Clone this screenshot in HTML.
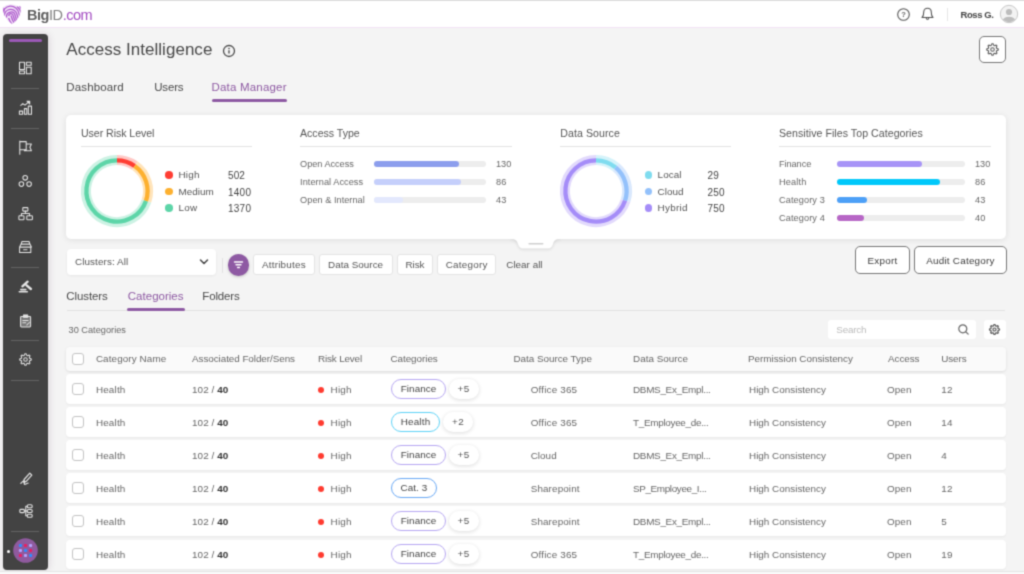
<!DOCTYPE html>
<html lang="en"><head><meta charset="utf-8"><title>BigID - Access Intelligence</title>
<style>
*{box-sizing:border-box;margin:0;padding:0}
html,body{width:1024px;height:574px;overflow:hidden;background:#f4f4f4;font-family:"Liberation Sans",sans-serif;color:#444}
#app{will-change:transform;filter:url(#soft);position:relative;width:1024px;height:574px;overflow:hidden;background:#f4f4f4}
.a{position:absolute}
.t{position:absolute;white-space:nowrap;line-height:1;transform-origin:0 50%}
#topbar{left:0;top:0;width:1024px;height:28px;background:#fff;border-top:1px solid #dcdcdc;border-bottom:1px solid #f2e3f5}
#side{left:3px;top:34px;width:45px;height:536px;background:#434343;border-radius:4px;box-shadow:1px 0 7px rgba(90,50,90,.16)}
.sdiv{position:absolute;left:8px;width:28px;height:1px;background:#626262}
.card{background:#fff;border-radius:5px;box-shadow:0 1px 6px rgba(0,0,0,.09)}
.hr{position:absolute;height:1px;background:#e3e3e3}
.bar{position:absolute;height:6px;border-radius:3px;background:#ededed}
.bar i{position:absolute;left:0;top:0;height:6px;border-radius:3px}
.dot{position:absolute;width:7.500px;height:7.500px;border-radius:50%}
.chip{position:absolute;height:21px;top:254px;background:#fff;border:1px solid #e4e4e4;border-radius:3px}
.btn{position:absolute;top:246px;height:28px;background:#fff;border:1px solid #777;border-radius:5px}
.row{position:absolute;left:66px;width:940px;height:29px;background:#fff;border-radius:4px;box-shadow:0 1px 2px rgba(0,0,0,.05)}
.cb{position:absolute;left:6px;width:12px;height:12px;border:1px solid #c4c4c4;border-radius:3px;background:#fff}
.pill{position:absolute;height:20px;border-radius:10px;background:#fff;border:1px solid #b7a8f2}
.plus{position:absolute;height:20px;border-radius:10px;background:#fff;box-shadow:0 1px 4px rgba(0,0,0,.14)}
.rd{position:absolute;width:6px;height:6px;border-radius:3px;background:#ff3b30}
</style></head>
<body><svg width="0" height="0" style="position:absolute"><defs><filter id="soft" x="0" y="0" width="100%" height="100%" color-interpolation-filters="sRGB"><feConvolveMatrix order="3" kernelMatrix="0.03 0.12 0.03 0.12 0.4 0.12 0.03 0.12 0.03" divisor="1" edgeMode="duplicate" preserveAlpha="true"/></filter></defs></svg><div id="app">
<div id="topbar" class="a"></div>
<svg class="a" style="left:1px;top:3px" width="22" height="23" viewBox="0 0 22 23" fill="none"><defs><clipPath id="sh"><path d="M1.600 4.200c1.200-.3 2.200-.9 3-1.800 1.700-.500 3.500-.800 5.500-.800 2 0 3.700 .3 5.300 .9 .9 1.100 2.300 1.500 3.400 .4l.8 .8c.5 4.500-.5 8.500-2.800 11.800-1.600 2.300-3.400 4-5.600 5.400-2.500-1.500-4.700-3.600-6.300-6.200-1.900-3.100-2.900-6.700-3.300-10.500z"/></clipPath></defs>
<path d="M1.600 4.200c1.200-.3 2.200-.9 3-1.800 1.700-.500 3.500-.800 5.500-.800 2 0 3.700 .3 5.300 .9 .9 1.100 2.300 1.500 3.400 .4l.8 .8c.5 4.500-.5 8.500-2.800 11.800-1.600 2.300-3.400 4-5.600 5.400-2.500-1.500-4.700-3.600-6.300-6.200-1.900-3.100-2.900-6.700-3.300-10.500z" fill="#b566d3" fill-opacity=".18"/><g clip-path="url(#sh)" stroke="#ae5ccd" stroke-width="1.300">
<path d="M10 12.500c.6 3 2 6 4 8.500"/>
<path d="M7.800 13c0-3 4-3.300 4.400-.3 .5 3 1.800 5.500 3.600 7.500"/>
<path d="M5.600 14.500c-.8-6.500 7.600-7.500 8.600-1.800 .5 2.700 1.500 4.800 3 6.500"/>
<path d="M3.500 15c-1.500-10.500 11.400-11.500 12.700-2.800 .4 2.300 1.200 4 2.400 5.300"/>
<path d="M1.600 13c-1-12.500 15.200-13.500 16.600-1.500 .2 1.700 .8 3 1.700 4"/>
<path d="M16 3.500c2.300 1.800 3.800 4.300 4.200 7.300M18.500 3c1.200 1.300 2.200 3 2.700 5"/>
<path d="M3.300 5c-.6 2.500-.6 5.500 .4 8.500M1.200 6c-.3 2-.2 4.500 .5 7"/>
<path d="M7.600 15c.8 2.800 2.300 5.300 4.600 7.500M5.700 17c.9 2.200 2.400 4.200 4.500 6M10.200 22l3 0"/>
</g></svg>
<span class="t" style="left:27px;top:7.500px;font-size:14.500px;letter-spacing:-0.45px;color:#555"><b style="color:#606060">Big</b><span style="color:#808080">ID</span><span style="color:#a34cc2">.com</span></span>
<svg class="a" style="left:896px;top:7px" width="15" height="15" viewBox="0 0 15 15"><circle cx="7.500" cy="7.500" r="5.800" fill="none" stroke="#555" stroke-width="1.100"/><text x="7.500" y="10.300" font-size="7.500" font-weight="700" text-anchor="middle" fill="#666" font-family="Liberation Sans, sans-serif">?</text></svg>
<svg class="a" style="left:920px;top:6px" width="15" height="16" viewBox="0 0 15 16" fill="none" stroke="#555" stroke-width="1.100" stroke-linejoin="round" stroke-linecap="round"><path d="M2 11.500c1.600-1.200 1.700-2.600 1.700-5.200 0-2.300 1.500-4 3.800-4s3.800 1.700 3.800 4c0 2.600 .1 4 1.700 5.200z"/><path d="M6.300 12.200c.2 .9 .6 1.300 1.200 1.300s1-.4 1.200-1.300"/></svg>
<div class="a" style="left:947px;top:8px;width:1px;height:13px;background:#e6e6e6"></div>
<span class="t" style="left:960.5px;top:10px;font-size:9.5px;color:#444;font-weight:700;letter-spacing:-0.41px;">Ross G.</span>
<svg class="a" style="left:999px;top:4px" width="20" height="20" viewBox="0 0 20 20"><defs><clipPath id="av"><circle cx="10" cy="10" r="8.200"/></clipPath></defs><circle cx="10" cy="10" r="8.700" fill="#f3f3f3" stroke="#c8c8c8" stroke-width="1"/><g clip-path="url(#av)" fill="#bdbdbd"><circle cx="10" cy="8" r="3.100"/><ellipse cx="10" cy="17.500" rx="6.500" ry="4.800"/></g></svg>
<div id="side" class="a">
<div class="a" style="left:6px;top:5px;width:33px;height:3px;border-radius:2px;background:#9b59b6"></div>
<div class="sdiv" style="top:54.0px"></div>
<div class="sdiv" style="top:93.5px"></div>
<div class="sdiv" style="top:232.5px"></div>
<div class="sdiv" style="top:306.0px"></div>
<div class="sdiv" style="top:346.0px"></div>
<div class="sdiv" style="top:497.0px"></div>
</div>
<svg class="a" style="left:0;top:0" width="50" height="400" viewBox="0 0 50 400" fill="none" stroke="#e4e4e4" stroke-width="1.050" stroke-linejoin="round" stroke-linecap="round"><rect x="19.500" y="62.200" width="5" height="7.300"/><rect x="26.400" y="62.200" width="4.800" height="3"/><rect x="19.500" y="71" width="5" height="2.800"/><rect x="26.400" y="67.200" width="4.800" height="6.600"/><rect x="19.400" y="111.100" width="3.200" height="3.200"/><rect x="24.400" y="108.600" width="2.400" height="5.700"/><rect x="28.300" y="106.100" width="3.200" height="8.200"/><path d="M20.800 105.400l2-1.800 2.200 1.600 3.800-3.300"/><path d="M27 101.200h2.700v2.700z" fill="#e4e4e4"/><path d="M19.800 141v13.300M19.800 141.600h6.400v8.200h-6.400M26.200 144h5.200l-1.500 3.300 1.500 3.400h-7v-.9"/><circle cx="25.200" cy="177.800" r="2.300"/><circle cx="21.400" cy="184.100" r="2.300"/><circle cx="29.100" cy="184.100" r="2.300"/><rect x="22.800" y="207.600" width="5.100" height="3.500" rx=".6"/><rect x="18.900" y="215.800" width="5.100" height="4" rx=".8"/><rect x="26.800" y="215.800" width="5.600" height="4" rx=".8"/><path d="M25.400 211.100v2.400M21.400 215.800v-2.300h8.200v2.300"/><path d="M22 241.500h7l.9 2.600h-8.800zM21.100 244.100l-1.500 3h11.800l-1.500-3M19.600 247.100h11.200v5.300h-11.200zM23.600 249.800h3.400"/><path d="M22.400 286.300l5.200-4.600M26.600 285.300l4.300 3.700" stroke-width="2.400"/><path d="M19.300 291.700h8M20.800 289.600h5" stroke-width="1.600"/><rect x="20.600" y="316.400" width="10" height="10.500" rx=".8" fill="#fff" fill-opacity=".28"/><rect x="23.500" y="314.900" width="4.200" height="2.400" fill="#e4e4e4"/><path d="M22.800 320.500h5.400M22.800 322.800h3M26.800 325l2.500-2.500"/></svg>
<svg class="a" style="left:17.9px;top:352.1px" width="15" height="15" viewBox="0 0 16 16" fill="none" stroke="#e4e4e4" stroke-width="1.1" stroke-linejoin="round" stroke-linecap="round"><path d="M14.17 7.39L14.17 8.61L12.40 9.34L12.06 10.17L12.79 11.93L11.93 12.79L10.17 12.06L9.34 12.40L8.61 14.17L7.39 14.17L6.66 12.40L5.83 12.06L4.07 12.79L3.21 11.93L3.94 10.17L3.60 9.34L1.83 8.61L1.83 7.39L3.60 6.66L3.94 5.83L3.21 4.07L4.07 3.21L5.83 3.94L6.66 3.60L7.39 1.83L8.61 1.83L9.34 3.60L10.17 3.94L11.93 3.21L12.79 4.07L12.06 5.83L12.40 6.66Z"/><circle cx="8" cy="8" r="1.900"/></svg>
<svg class="a" style="left:17.5px;top:470.5px" width="16" height="16" viewBox="0 0 16 16" fill="none" stroke="#e4e4e4" stroke-width="1.2" stroke-linejoin="round" stroke-linecap="round"><path d="M11.800 2.200l2 2-5.600 6.200-2.600 .8 .5-2.700z" stroke-width="1.200"/><path d="M2.800 12.300c1.500-1.800 3-2.800 3.800-2.300 .9 .6-1.200 2.800-.2 3.300 .9 .4 2.300-1 3.800-1.300"/></svg>
<svg class="a" style="left:17.5px;top:503.2px" width="16" height="16" viewBox="0 0 16 16" fill="none" stroke="#e4e4e4" stroke-width="1.1" stroke-linejoin="round" stroke-linecap="round"><rect x="1.800" y="6.400" width="4.600" height="3.200" rx="1"/><rect x="9.200" y="1.800" width="5" height="3" rx="1.300"/><rect x="9.200" y="6.500" width="5" height="3" rx="1.300"/><rect x="9.200" y="11.200" width="5" height="3" rx="1.300"/><path d="M6.400 8h2.800M7.800 3.300v9.400M7.800 3.300h1.400M7.800 12.700h1.400"/></svg>
<svg class="a" style="left:12.900px;top:538.400px" width="25" height="25" viewBox="0 0 25 25"><circle cx="12.500" cy="12.500" r="12.300" fill="#8f5a9e"/><rect x="5.80" y="5.90" width="3.200" height="3.200" rx="1.100" fill="#2f8cff"/><rect x="10.90" y="5.90" width="3.200" height="3.200" rx="1.100" fill="#ea1d63"/><rect x="16.00" y="5.90" width="3.200" height="3.200" rx="1.100" fill="#b6a0fb"/><rect x="5.80" y="10.90" width="3.200" height="3.200" rx="1.100" fill="#b6a0fb"/><rect x="10.90" y="10.90" width="3.200" height="3.200" rx="1.100" fill="#2f8cff"/><rect x="16.00" y="10.90" width="3.200" height="3.200" rx="1.100" fill="#ea1d63"/><rect x="5.80" y="15.90" width="3.200" height="3.200" rx="1.100" fill="#ea1d63"/><rect x="10.90" y="15.90" width="3.200" height="3.200" rx="1.100" fill="#b6a0fb"/><rect x="16.00" y="15.90" width="3.200" height="3.200" rx="1.100" fill="#2f8cff"/></svg>
<div class="a" style="left:6.500px;top:549.800px;width:3px;height:3px;border-radius:50%;background:#fff"></div>
<span class="t" style="left:66.3px;top:41px;font-size:17px;color:#484848;letter-spacing:0.03px;">Access Intelligence</span>
<svg class="a" style="left:222.200px;top:43.500px" width="14" height="14" viewBox="0 0 14 14"><circle cx="7" cy="7" r="5.500" fill="none" stroke="#4c4c4c" stroke-width="1.300"/><path d="M7 6.300v3.200" stroke="#444" stroke-width="1.300"/><circle cx="7" cy="4.500" r=".8" fill="#444"/></svg>
<span class="t" style="left:66.3px;top:82px;font-size:11.5px;color:#4a4a4a;letter-spacing:0.13px;">Dashboard</span>
<span class="t" style="left:154.2px;top:82px;font-size:11.5px;color:#4a4a4a;letter-spacing:-0.17px;">Users</span>
<span class="t" style="left:211.5px;top:82px;font-size:11.5px;color:#8e5aa3;letter-spacing:0.19px;">Data Manager</span>
<div class="a" style="left:211.500px;top:99.300px;width:75.500px;height:3.200px;border-radius:2px;background:#8e5aa3"></div>
<div class="a" style="left:979px;top:36px;width:27px;height:27px;background:#fff;border:1px solid #777;border-radius:5px"></div>
<svg class="a" style="left:985px;top:42px" width="15" height="15" viewBox="0 0 16 16" fill="none" stroke="#555" stroke-width="1.100" stroke-linejoin="round"><path d="M14.17 7.39L14.17 8.61L12.40 9.34L12.06 10.17L12.79 11.93L11.93 12.79L10.17 12.06L9.34 12.40L8.61 14.17L7.39 14.17L6.66 12.40L5.83 12.06L4.07 12.79L3.21 11.93L3.94 10.17L3.60 9.34L1.83 8.61L1.83 7.39L3.60 6.66L3.94 5.83L3.21 4.07L4.07 3.21L5.83 3.94L6.66 3.60L7.39 1.83L8.61 1.83L9.34 3.60L10.17 3.94L11.93 3.21L12.79 4.07L12.06 5.83L12.40 6.66Z"/><circle cx="8" cy="8" r="1.900"/></svg>
<div class="a card" style="left:66px;top:115px;width:940px;height:124px"></div>
<svg class="a" style="left:513px;top:239px;overflow:visible" width="45" height="16" viewBox="0 0 45 16"><defs><filter id="nb" x="-20%" y="-50%" width="140%" height="250%"><feGaussianBlur stdDeviation="1.500"/></filter><clipPath id="nc"><rect x="-6" y="0" width="57" height="18"/></clipPath></defs><g clip-path="url(#nc)"><path d="M-2 -1H47V0C42 0 41 2 40 5S38 9.400 35 9.400H10C7 9.400 6 8 5 5S3 0 -2 0Z" fill="#000" fill-opacity=".13" filter="url(#nb)" transform="translate(0 1)"/></g><path d="M-2 -1H47V0C42 0 41 2 40 5S38 9.400 35 9.400H10C7 9.400 6 8 5 5S3 0 -2 0Z" fill="#fff"/><path d="M16.200 4.800h13.500" stroke="#cfcfcf" stroke-width="1.600" stroke-linecap="round"/></svg>
<span class="t" style="left:81.0px;top:128px;font-size:10.6px;color:#555;letter-spacing:-0.05px;">User Risk Level</span>
<span class="t" style="left:300.0px;top:128px;font-size:10.6px;color:#555;letter-spacing:-0.01px;">Access Type</span>
<span class="t" style="left:560.2px;top:128px;font-size:10.6px;color:#555;letter-spacing:0.08px;">Data Source</span>
<span class="t" style="left:779.0px;top:128px;font-size:10.6px;color:#555;letter-spacing:0.05px;">Sensitive Files Top Categories</span>
<div class="hr" style="left:81px;top:146px;width:171px"></div>
<div class="hr" style="left:300px;top:146px;width:212px"></div>
<div class="hr" style="left:560px;top:146px;width:171px"></div>
<div class="hr" style="left:779px;top:146px;width:212px"></div>
<svg class="a" style="left:77.2px;top:150.9px" width="80" height="80" viewBox="-40 -40 80 80" fill="none"><path d="M0.00 -31.10A31.1 31.1 0 0 1 17.93 -25.41" stroke="#ffc9c6" stroke-width="10"/><path d="M17.93 -25.41A31.1 31.1 0 0 1 29.41 10.13" stroke="#ffe4bb" stroke-width="10"/><path d="M29.41 10.13A31.1 31.1 0 1 1 -0.00 -31.10" stroke="#cdf2e4" stroke-width="10"/><path d="M0.00 -30.60A30.6 30.6 0 0 1 17.64 -25.00" stroke="#ff3d33" stroke-width="4.300"/><path d="M17.64 -25.00A30.6 30.6 0 0 1 28.93 9.96" stroke="#fdb02f" stroke-width="4.300"/><path d="M28.93 9.96A30.6 30.6 0 1 1 -0.00 -30.60" stroke="#5dd5a8" stroke-width="4.300"/></svg>
<svg class="a" style="left:556.3px;top:150.9px" width="80" height="80" viewBox="-40 -40 80 80" fill="none"><path d="M0.00 -31.10A31.1 31.1 0 0 1 19.87 -23.93" stroke="#d5f3fa" stroke-width="10"/><path d="M19.87 -23.93A31.1 31.1 0 0 1 29.53 9.77" stroke="#d9e8fd" stroke-width="10"/><path d="M29.53 9.77A31.1 31.1 0 1 1 -0.00 -31.10" stroke="#e2dafc" stroke-width="10"/><path d="M0.00 -30.60A30.6 30.6 0 0 1 19.55 -23.54" stroke="#7fdcef" stroke-width="4.300"/><path d="M19.55 -23.54A30.6 30.6 0 0 1 29.05 9.61" stroke="#93c1fb" stroke-width="4.300"/><path d="M29.05 9.61A30.6 30.6 0 1 1 -0.00 -30.60" stroke="#a58df8" stroke-width="4.300"/></svg>
<div class="dot" style="left:165px;top:171.25px;background:#ff3d33"></div>
<span class="t" style="left:178.5px;top:170px;font-size:9.9px;color:#555;letter-spacing:0.20px;">High</span>
<span class="t" style="left:228.0px;top:171px;font-size:10px;color:#444;letter-spacing:0.10px;">502</span>
<div class="dot" style="left:165px;top:187.85px;background:#fdb02f"></div>
<span class="t" style="left:178.5px;top:187px;font-size:9.9px;color:#555;letter-spacing:0.01px;">Medium</span>
<span class="t" style="left:228.0px;top:188px;font-size:10px;color:#444;letter-spacing:0.24px;">1400</span>
<div class="dot" style="left:165px;top:204.25px;background:#5dd5a8"></div>
<span class="t" style="left:178.5px;top:203px;font-size:9.9px;color:#555;letter-spacing:0.23px;">Low</span>
<span class="t" style="left:228.0px;top:204px;font-size:10px;color:#444;letter-spacing:0.24px;">1370</span>
<div class="dot" style="left:644.500px;top:171.25px;background:#7fdcef"></div>
<span class="t" style="left:657.6px;top:170px;font-size:9.9px;color:#555;letter-spacing:0.06px;">Local</span>
<span class="t" style="left:707.6px;top:171px;font-size:10px;color:#444;letter-spacing:0.09px;">29</span>
<div class="dot" style="left:644.500px;top:187.85px;background:#93c1fb"></div>
<span class="t" style="left:657.6px;top:187px;font-size:9.9px;color:#555;letter-spacing:0.04px;">Cloud</span>
<span class="t" style="left:707.6px;top:188px;font-size:10px;color:#444;letter-spacing:0.20px;">250</span>
<div class="dot" style="left:644.500px;top:204.25px;background:#a58df8"></div>
<span class="t" style="left:657.6px;top:203px;font-size:9.9px;color:#555;letter-spacing:0.28px;">Hybrid</span>
<span class="t" style="left:707.6px;top:204px;font-size:10px;color:#444;letter-spacing:0.20px;">750</span>
<span class="t" style="left:300.1px;top:160px;font-size:9.2px;color:#666;letter-spacing:-0.04px;">Open Access</span>
<div class="bar" style="left:374.100px;top:161.2px;width:112.200px"><i style="width:84.6px;background:#8c9eed"></i></div>
<span class="t" style="left:495.9px;top:160px;font-size:9.2px;color:#666;letter-spacing:0.05px;">130</span>
<span class="t" style="left:300.1px;top:178px;font-size:9.2px;color:#666;letter-spacing:0.05px;">Internal Access</span>
<div class="bar" style="left:374.100px;top:179.2px;width:112.200px"><i style="width:86.6px;background:#c5cffb"></i></div>
<span class="t" style="left:495.9px;top:178px;font-size:9.2px;color:#666;letter-spacing:0.13px;">86</span>
<span class="t" style="left:300.1px;top:196px;font-size:9.2px;color:#666;letter-spacing:0.02px;">Open &amp; Internal</span>
<div class="bar" style="left:374.100px;top:197.3px;width:112.200px"><i style="width:29.4px;background:#e3e8fd"></i></div>
<span class="t" style="left:495.9px;top:196px;font-size:9.2px;color:#666;letter-spacing:0.13px;">43</span>
<span class="t" style="left:779.0px;top:160px;font-size:9.2px;color:#666;letter-spacing:-0.07px;">Finance</span>
<div class="bar" style="left:837.400px;top:161.2px;width:128px"><i style="width:84.3px;background:#a794f7"></i></div>
<span class="t" style="left:974.9px;top:160px;font-size:9.2px;color:#666;letter-spacing:0.05px;">130</span>
<span class="t" style="left:779.0px;top:178px;font-size:9.2px;color:#666;letter-spacing:0.14px;">Health</span>
<div class="bar" style="left:837.400px;top:179.2px;width:128px"><i style="width:102.4px;background:#00c8fa"></i></div>
<span class="t" style="left:974.9px;top:178px;font-size:9.2px;color:#666;letter-spacing:0.13px;">86</span>
<span class="t" style="left:779.0px;top:196px;font-size:9.2px;color:#666;letter-spacing:0.09px;">Category 3</span>
<div class="bar" style="left:837.400px;top:197.3px;width:128px"><i style="width:29.6px;background:#4da0f7"></i></div>
<span class="t" style="left:974.9px;top:196px;font-size:9.2px;color:#666;letter-spacing:0.13px;">43</span>
<span class="t" style="left:779.0px;top:214px;font-size:9.2px;color:#666;letter-spacing:0.09px;">Category 4</span>
<div class="bar" style="left:837.400px;top:215.3px;width:128px"><i style="width:26.6px;background:#b766c6"></i></div>
<span class="t" style="left:974.9px;top:214px;font-size:9.2px;color:#666;letter-spacing:0.13px;">40</span>
<div class="a" style="left:67px;top:249px;width:148.500px;height:25.500px;background:#fff;border-radius:4px;box-shadow:0 1px 3px rgba(0,0,0,.06)"></div>
<span class="t" style="left:75.0px;top:257px;font-size:9.9px;color:#555;letter-spacing:0.09px;">Clusters: All</span>
<svg class="a" style="left:199.300px;top:257.700px" width="10" height="8" viewBox="0 0 10 8" fill="none" stroke="#444" stroke-width="1.500" stroke-linecap="round" stroke-linejoin="round"><path d="M1.500 2l3.500 3.500 3.500-3.500"/></svg>
<div class="a" style="left:222px;top:258px;width:1px;height:15px;background:#e2e2e2"></div>
<div class="a" style="left:228.200px;top:254.300px;width:21.300px;height:21.300px;border-radius:50%;background:#8e5aa3;box-shadow:0 1px 3px rgba(0,0,0,.2)"></div>
<svg class="a" style="left:228.300px;top:254.400px" width="21" height="21" viewBox="0 0 21 21" stroke="#fff" stroke-width="1.400" stroke-linecap="round"><path d="M6.500 8h8M8 10.800h5M9.600 13.500h1.800"/></svg>
<div class="chip" style="left:252.8px;width:62.2px"></div>
<span class="t" style="left:261.9px;top:260px;font-size:9.9px;color:#555;letter-spacing:0.23px;">Attributes</span>
<div class="chip" style="left:319px;width:73.9px"></div>
<span class="t" style="left:328.1px;top:260px;font-size:9.9px;color:#555;letter-spacing:0.01px;">Data Source</span>
<div class="chip" style="left:396.6px;width:36.7px"></div>
<span class="t" style="left:405.4px;top:260px;font-size:9.9px;color:#555;letter-spacing:-0.03px;">Risk</span>
<div class="chip" style="left:436.8px;width:59.7px"></div>
<span class="t" style="left:445.7px;top:260px;font-size:9.9px;color:#555;letter-spacing:0.23px;">Category</span>
<span class="t" style="left:506.3px;top:260px;font-size:9.9px;color:#555;letter-spacing:-0.00px;">Clear all</span>
<div class="btn" style="left:855px;width:55px"></div>
<span class="t" style="left:867.5px;top:256px;font-size:9.9px;color:#3a3a3a;letter-spacing:0.23px;">Export</span>
<div class="btn" style="left:914px;width:93px"></div>
<span class="t" style="left:926.2px;top:256px;font-size:9.9px;color:#3a3a3a;letter-spacing:0.23px;">Audit Category</span>
<span class="t" style="left:66.3px;top:291px;font-size:11.5px;color:#4a4a4a;letter-spacing:-0.10px;">Clusters</span>
<span class="t" style="left:127.8px;top:291px;font-size:11.5px;color:#8e5aa3;letter-spacing:0.01px;">Categories</span>
<span class="t" style="left:202.3px;top:291px;font-size:11.5px;color:#4a4a4a;letter-spacing:-0.14px;">Folders</span>
<div class="a" style="left:67px;top:310px;width:938px;height:1px;background:#e2e2e2"></div>
<div class="a" style="left:126.800px;top:307.500px;width:58px;height:3.200px;border-radius:2px;background:#8e5aa3"></div>
<span class="t" style="left:68.5px;top:326px;font-size:9.2px;color:#666;letter-spacing:0.02px;">30 Categories</span>
<div class="a" style="left:827.700px;top:320px;width:148.600px;height:19px;background:#fff;border-radius:3px"></div>
<span class="t" style="left:836.3px;top:325px;font-size:9.9px;color:#bbb;letter-spacing:-0.20px;">Search</span>
<svg class="a" style="left:957.300px;top:323.300px" width="13" height="13" viewBox="0 0 13 13" fill="none" stroke="#666" stroke-width="1.200" stroke-linecap="round"><circle cx="5.800" cy="5.800" r="4"/><path d="M8.800 8.800l2.400 2.400"/></svg>
<div class="a" style="left:984.400px;top:320px;width:21.300px;height:19px;background:#fff;border-radius:3px"></div>
<svg class="a" style="left:988.200px;top:323.100px" width="13" height="13" viewBox="0 0 16 16" fill="none" stroke="#555" stroke-width="1.400" stroke-linejoin="round"><path d="M14.17 7.39L14.17 8.61L12.40 9.34L12.06 10.17L12.79 11.93L11.93 12.79L10.17 12.06L9.34 12.40L8.61 14.17L7.39 14.17L6.66 12.40L5.83 12.06L4.07 12.79L3.21 11.93L3.94 10.17L3.60 9.34L1.83 8.61L1.83 7.39L3.60 6.66L3.94 5.83L3.21 4.07L4.07 3.21L5.83 3.94L6.66 3.60L7.39 1.83L8.61 1.83L9.34 3.60L10.17 3.94L11.93 3.21L12.79 4.07L12.06 5.83L12.40 6.66Z"/><circle cx="8" cy="8" r="1.900"/></svg>
<div class="a" style="left:66px;top:347px;width:940px;height:23.500px;background:#fafafa;border-radius:4px;box-shadow:0 1px 3px rgba(0,0,0,.10)"></div>
<div class="cb" style="left:72px;top:353px"></div>
<span class="t" style="left:95.9px;top:354px;font-size:9.9px;color:#666;letter-spacing:0.10px;">Category Name</span>
<span class="t" style="left:192.0px;top:354px;font-size:9.9px;color:#666;letter-spacing:-0.06px;">Associated Folder/Sens</span>
<span class="t" style="left:318.1px;top:354px;font-size:9.9px;color:#666;letter-spacing:-0.17px;">Risk Level</span>
<span class="t" style="left:390.4px;top:354px;font-size:9.9px;color:#666;letter-spacing:-0.04px;">Categories</span>
<span class="t" style="left:513.4px;top:354px;font-size:9.9px;color:#666;letter-spacing:-0.02px;">Data Source Type</span>
<span class="t" style="left:633.0px;top:354px;font-size:9.9px;color:#666;letter-spacing:0.01px;">Data Source</span>
<span class="t" style="left:748.0px;top:354px;font-size:9.9px;color:#666;letter-spacing:-0.02px;">Permission Consistency</span>
<span class="t" style="left:888.0px;top:354px;font-size:9.9px;color:#666;letter-spacing:-0.07px;">Access</span>
<span class="t" style="left:941.2px;top:354px;font-size:9.9px;color:#666;letter-spacing:-0.10px;">Users</span>
<div class="row" style="top:374px;height:30px"></div>
<div class="cb" style="left:72px;top:383px"></div>
<span class="t" style="left:95.9px;top:385px;font-size:9.9px;color:#666;letter-spacing:0.18px;">Health</span>
<span class="t" style="left:192.0px;top:385px;font-size:9.9px;color:#666;letter-spacing:0.09px;">102 / <b style="color:#333">40</b></span>
<div class="rd" style="left:318.100px;top:386.6px"></div>
<span class="t" style="left:330.6px;top:385px;font-size:9.9px;color:#666;letter-spacing:0.20px;">High</span>
<div class="pill" style="left:391.100px;top:379px;width:54.7px;border-color:#b7a8f2"></div>
<span class="t" style="left:400.8px;top:384px;font-size:9.9px;color:#444;letter-spacing:0.04px;">Finance</span>
<div class="plus" style="left:448.6px;top:379px;width:30px"></div>
<span class="t" style="left:457.6px;top:384px;font-size:9.9px;color:#555;letter-spacing:0.27px;">+5</span>
<span class="t" style="left:530.7px;top:385px;font-size:9.9px;color:#666;letter-spacing:0.17px;">Office 365</span>
<span class="t" style="left:633.0px;top:385px;font-size:9.9px;color:#666;letter-spacing:-0.28px;">DBMS_Ex_Empl...</span>
<span class="t" style="left:749.0px;top:385px;font-size:9.9px;color:#666;letter-spacing:0.01px;">High Consistency</span>
<span class="t" style="left:887.0px;top:385px;font-size:9.9px;color:#666;letter-spacing:0.08px;">Open</span>
<span class="t" style="left:941.2px;top:385px;font-size:9.9px;color:#666;letter-spacing:0.31px;">12</span>
<div class="row" style="top:407px;height:30px"></div>
<div class="cb" style="left:72px;top:416px"></div>
<span class="t" style="left:95.9px;top:418px;font-size:9.9px;color:#666;letter-spacing:0.18px;">Health</span>
<span class="t" style="left:192.0px;top:418px;font-size:9.9px;color:#666;letter-spacing:0.09px;">102 / <b style="color:#333">40</b></span>
<div class="rd" style="left:318.100px;top:419.7px"></div>
<span class="t" style="left:330.6px;top:418px;font-size:9.9px;color:#666;letter-spacing:0.20px;">High</span>
<div class="pill" style="left:391.100px;top:412px;width:49.2px;border-color:#5fd3f7"></div>
<span class="t" style="left:400.7px;top:417px;font-size:9.9px;color:#444;letter-spacing:0.18px;">Health</span>
<div class="plus" style="left:443.1px;top:412px;width:30px"></div>
<span class="t" style="left:452.1px;top:417px;font-size:9.9px;color:#555;letter-spacing:0.27px;">+2</span>
<span class="t" style="left:530.7px;top:418px;font-size:9.9px;color:#666;letter-spacing:0.17px;">Office 365</span>
<span class="t" style="left:633.0px;top:418px;font-size:9.9px;color:#666;letter-spacing:-0.29px;">T_Employee_de...</span>
<span class="t" style="left:749.0px;top:418px;font-size:9.9px;color:#666;letter-spacing:0.01px;">High Consistency</span>
<span class="t" style="left:887.0px;top:418px;font-size:9.9px;color:#666;letter-spacing:0.08px;">Open</span>
<span class="t" style="left:941.2px;top:418px;font-size:9.9px;color:#666;letter-spacing:0.31px;">14</span>
<div class="row" style="top:440px;height:30px"></div>
<div class="cb" style="left:72px;top:449px"></div>
<span class="t" style="left:95.9px;top:451px;font-size:9.9px;color:#666;letter-spacing:0.18px;">Health</span>
<span class="t" style="left:192.0px;top:451px;font-size:9.9px;color:#666;letter-spacing:0.09px;">102 / <b style="color:#333">40</b></span>
<div class="rd" style="left:318.100px;top:452.8px"></div>
<span class="t" style="left:330.6px;top:451px;font-size:9.9px;color:#666;letter-spacing:0.20px;">High</span>
<div class="pill" style="left:391.100px;top:445px;width:54.7px;border-color:#b7a8f2"></div>
<span class="t" style="left:400.8px;top:450px;font-size:9.9px;color:#444;letter-spacing:0.04px;">Finance</span>
<div class="plus" style="left:448.6px;top:445px;width:30px"></div>
<span class="t" style="left:457.6px;top:450px;font-size:9.9px;color:#555;letter-spacing:0.27px;">+5</span>
<span class="t" style="left:530.7px;top:451px;font-size:9.9px;color:#666;letter-spacing:0.04px;">Cloud</span>
<span class="t" style="left:633.0px;top:451px;font-size:9.9px;color:#666;letter-spacing:-0.28px;">DBMS_Ex_Empl...</span>
<span class="t" style="left:749.0px;top:451px;font-size:9.9px;color:#666;letter-spacing:0.01px;">High Consistency</span>
<span class="t" style="left:887.0px;top:451px;font-size:9.9px;color:#666;letter-spacing:0.08px;">Open</span>
<span class="t" style="left:941.2px;top:451px;font-size:9.9px;color:#666;letter-spacing:0.30px;">4</span>
<div class="row" style="top:473px;height:30px"></div>
<div class="cb" style="left:72px;top:482px"></div>
<span class="t" style="left:95.9px;top:484px;font-size:9.9px;color:#666;letter-spacing:0.18px;">Health</span>
<span class="t" style="left:192.0px;top:484px;font-size:9.9px;color:#666;letter-spacing:0.09px;">102 / <b style="color:#333">40</b></span>
<div class="rd" style="left:318.100px;top:485.8px"></div>
<span class="t" style="left:330.6px;top:484px;font-size:9.9px;color:#666;letter-spacing:0.20px;">High</span>
<div class="pill" style="left:391.100px;top:478px;width:45.5px;border-color:#6aa9f5"></div>
<span class="t" style="left:400.4px;top:483px;font-size:9.9px;color:#444;letter-spacing:0.11px;">Cat. 3</span>
<span class="t" style="left:530.7px;top:484px;font-size:9.9px;color:#666;letter-spacing:0.12px;">Sharepoint</span>
<span class="t" style="left:633.0px;top:484px;font-size:9.9px;color:#666;letter-spacing:-0.35px;">SP_Employee_I...</span>
<span class="t" style="left:749.0px;top:484px;font-size:9.9px;color:#666;letter-spacing:0.01px;">High Consistency</span>
<span class="t" style="left:887.0px;top:484px;font-size:9.9px;color:#666;letter-spacing:0.08px;">Open</span>
<span class="t" style="left:941.2px;top:484px;font-size:9.9px;color:#666;letter-spacing:0.31px;">12</span>
<div class="row" style="top:506px;height:30px"></div>
<div class="cb" style="left:72px;top:515px"></div>
<span class="t" style="left:95.9px;top:517px;font-size:9.9px;color:#666;letter-spacing:0.18px;">Health</span>
<span class="t" style="left:192.0px;top:517px;font-size:9.9px;color:#666;letter-spacing:0.09px;">102 / <b style="color:#333">40</b></span>
<div class="rd" style="left:318.100px;top:518.9px"></div>
<span class="t" style="left:330.6px;top:517px;font-size:9.9px;color:#666;letter-spacing:0.20px;">High</span>
<div class="pill" style="left:391.100px;top:511px;width:54.7px;border-color:#b7a8f2"></div>
<span class="t" style="left:400.8px;top:516px;font-size:9.9px;color:#444;letter-spacing:0.04px;">Finance</span>
<div class="plus" style="left:448.6px;top:511px;width:30px"></div>
<span class="t" style="left:457.6px;top:516px;font-size:9.9px;color:#555;letter-spacing:0.27px;">+5</span>
<span class="t" style="left:530.7px;top:517px;font-size:9.9px;color:#666;letter-spacing:0.12px;">Sharepoint</span>
<span class="t" style="left:633.0px;top:517px;font-size:9.9px;color:#666;letter-spacing:-0.28px;">DBMS_Ex_Empl...</span>
<span class="t" style="left:749.0px;top:517px;font-size:9.9px;color:#666;letter-spacing:0.01px;">High Consistency</span>
<span class="t" style="left:887.0px;top:517px;font-size:9.9px;color:#666;letter-spacing:0.08px;">Open</span>
<span class="t" style="left:941.2px;top:517px;font-size:9.9px;color:#666;letter-spacing:0.30px;">5</span>
<div class="row" style="top:540px;height:29px"></div>
<div class="cb" style="left:72px;top:548px"></div>
<span class="t" style="left:95.9px;top:550px;font-size:9.9px;color:#666;letter-spacing:0.18px;">Health</span>
<span class="t" style="left:192.0px;top:550px;font-size:9.9px;color:#666;letter-spacing:0.09px;">102 / <b style="color:#333">40</b></span>
<div class="rd" style="left:318.100px;top:552.0px"></div>
<span class="t" style="left:330.6px;top:550px;font-size:9.9px;color:#666;letter-spacing:0.20px;">High</span>
<div class="pill" style="left:391.100px;top:544px;width:54.7px;border-color:#b7a8f2"></div>
<span class="t" style="left:400.8px;top:549px;font-size:9.9px;color:#444;letter-spacing:0.04px;">Finance</span>
<div class="plus" style="left:448.6px;top:544px;width:30px"></div>
<span class="t" style="left:457.6px;top:549px;font-size:9.9px;color:#555;letter-spacing:0.27px;">+5</span>
<span class="t" style="left:530.7px;top:550px;font-size:9.9px;color:#666;letter-spacing:0.17px;">Office 365</span>
<span class="t" style="left:633.0px;top:550px;font-size:9.9px;color:#666;letter-spacing:-0.29px;">T_Employee_de...</span>
<span class="t" style="left:749.0px;top:550px;font-size:9.9px;color:#666;letter-spacing:0.01px;">High Consistency</span>
<span class="t" style="left:887.0px;top:550px;font-size:9.9px;color:#666;letter-spacing:0.08px;">Open</span>
<span class="t" style="left:941.2px;top:550px;font-size:9.9px;color:#666;letter-spacing:0.31px;">19</span>
<div class="a" style="left:0;top:571px;width:1024px;height:3px;background:#f9f9f9;border-top:1px solid #e6e6e6"></div>
</div></body></html>
